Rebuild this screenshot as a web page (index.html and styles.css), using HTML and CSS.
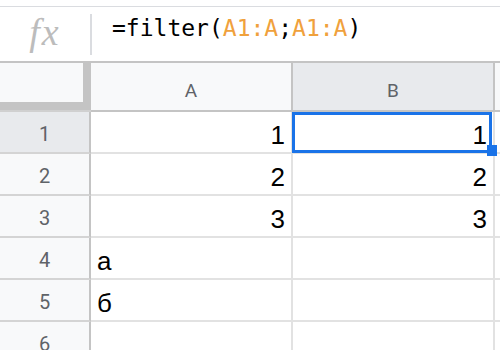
FILE: index.html
```html
<!DOCTYPE html>
<html lang="ru">
<head>
  <meta charset="UTF-8" />
  <meta name="viewport" content="width=device-width, initial-scale=1.0" />
  <title>Sheet - filter</title>
  <link rel="stylesheet" href="styles.css">
</head>
<body>
  <!-- Formula bar -->
  <div class="formula-bar">
    <div class="fx">fx</div>
    <div class="divider"></div>
    <div class="formula">=filter(<span class="ref">A1:A</span>;<span class="ref">A1:A</span>)</div>
  </div>

  <!-- Grid -->
  <div class="sheet">
    <div class="corner"></div>
    <div class="col-head">A</div>
    <div class="col-head active">B</div>
    <div class="col-head rest"></div>

    <div class="row-head active">1</div>
    <div class="cell num">1</div>
    <div class="cell num selected">1</div>
    <div class="cell rest"></div>

    <div class="row-head">2</div>
    <div class="cell num">2</div>
    <div class="cell num">2</div>
    <div class="cell rest"></div>

    <div class="row-head">3</div>
    <div class="cell num">3</div>
    <div class="cell num">3</div>
    <div class="cell rest"></div>

    <div class="row-head">4</div>
    <div class="cell">а</div>
    <div class="cell"></div>
    <div class="cell rest"></div>

    <div class="row-head">5</div>
    <div class="cell">б</div>
    <div class="cell"></div>
    <div class="cell rest"></div>

    <div class="row-head">6</div>
    <div class="cell"></div>
    <div class="cell"></div>
    <div class="cell rest"></div>
  </div>
</body>
</html>
```

FILE: styles.css
```css
/* Base styles */
body {
  font-family: "Liberation Sans", Arial, sans-serif;
  background-color: #fff;
  margin: 0;
  padding: 0;
  overflow: hidden;
}
/* Formula bar */
.formula-bar {
  display: flex;
  margin-top: 6px;
  height: 57px;
  box-sizing: border-box;
  border-top: 1px solid #dadce0;
  border-bottom: 2px solid #c4c4c4;
}
.fx {
  width: 90px;
  display: flex;
  align-items: center;
  justify-content: center;
  font-family: "Liberation Serif", serif;
  font-style: italic;
  font-size: 38px;
  letter-spacing: 2px;
  color: #bcbcbc;
  padding-bottom: 4px;
  box-sizing: border-box;
}
.divider {
  width: 2px;
  margin: 7px 0 6px;
  background: #dadce0;
}
.formula {
  padding: 9px 0 0 20px;
  font-family: "DejaVu Sans Mono", monospace;
  font-size: 23px;
  line-height: 24px;
  color: #000;
}
.formula .ref {
  color: #f0a13c;
}
/* Grid of cells */
.sheet {
  display: grid;
  grid-template-columns: 91px 202px 202px 1fr;
  grid-template-rows: 49px repeat(6, 42px);
}
.corner {
  background: #f8f9fa;
  border-bottom: 2px solid #d0d0d0;
  box-shadow: inset -8px 0 0 #c4c4c4, inset 0 -8px 0 #c4c4c4;
}
.col-head {
  display: flex;
  align-items: center;
  justify-content: center;
  padding-top: 8px;
  background: #f8f9fa;
  border-right: 2px solid #c4c4c4;
  border-bottom: 2px solid #c4c4c4;
  font-family: Roboto, "Liberation Sans", sans-serif;
  font-size: 19px;
  line-height: 19px;
  color: #5f6368;
}
.col-head.active {
  background: #e8eaed;
}
.col-head.rest {
  border-right: none;
}
.row-head {
  display: flex;
  align-items: center;
  justify-content: center;
  padding-top: 3px;
  background: #f8f9fa;
  border-right: 2px solid #c4c4c4;
  border-bottom: 2px solid #d4d4d4;
  font-family: Roboto, "Liberation Sans", sans-serif;
  font-size: 20px;
  line-height: 20px;
  color: #5f6368;
}
.row-head.active {
  background: #e8eaed;
}
.cell {
  display: flex;
  align-items: flex-end;
  padding: 0 6px 4px;
  border-right: 2px solid #e2e2e2;
  border-bottom: 2px solid #e2e2e2;
  font-size: 26px;
  line-height: 26px;
  color: #000;
}
.cell.num {
  justify-content: flex-end;
}
.cell.rest {
  border-right: none;
}
/* Active cell outline and fill handle */
.cell.selected {
  position: relative;
}
.cell.selected::after {
  content: "";
  position: absolute;
  left: -1px;
  top: 0;
  width: 200px;
  height: 41px;
  box-sizing: border-box;
  border: 3px solid #1a73e8;
}
.cell.selected::before {
  content: "";
  position: absolute;
  left: 194px;
  top: 33px;
  width: 10px;
  height: 11px;
  background: #1a73e8;
  z-index: 1;
}
```
